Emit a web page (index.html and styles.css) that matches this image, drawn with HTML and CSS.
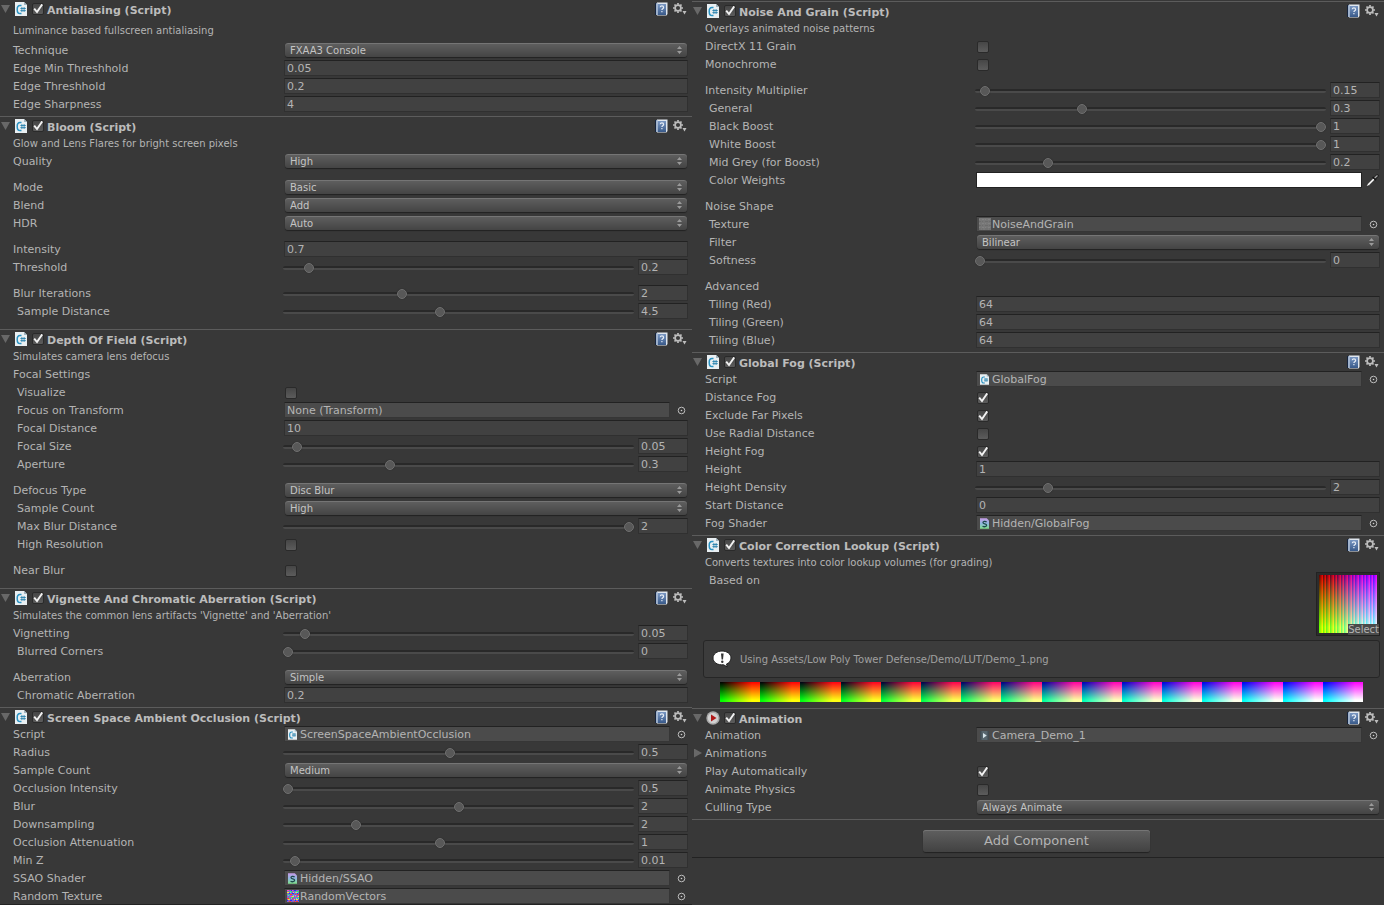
FILE: index.html
```html
<!DOCTYPE html>
<html lang="en">
<head>
<meta charset="utf-8">
<title>Inspector</title>
<link rel="stylesheet" href="styles.css">
</head>
<body>
<svg class="sprite" aria-hidden="true">
  <symbol id="i-script" viewBox="0 0 12 14">
    <path d="M0 0h9l3 3v11H0z" fill="#e9eff2"/><path d="M9 0v3h3z" fill="#9fb4bf"/>
    <path d="M6.500 3.600H5C3 3.600 2.200 5.200 2.200 7.500S3 11.600 5 11.600h1.500" fill="none" stroke="#2a92c2" stroke-width="1.500"/>
    <path d="M6.900 5v5M9.100 5v5M5.400 6.500h5.400M5.400 8.600h5.400" stroke="#1b7aa8" stroke-width=".8"/>
  </symbol>
  <symbol id="i-shader" viewBox="0 0 12 14">
    <path d="M0 0h9l3 3v11H0z" fill="url(#shade)"/>
    <path d="M8.800 4.800C7 3.600 3.800 4 4 6s4.800 1.200 4.800 3.400-3.400 2.400-5.400 1.200" fill="none" stroke="#1d4a4a" stroke-width="1.700"/>
  </symbol>
  <linearGradient id="shade" x1="0" y1="0" x2="0" y2="1"><stop offset="0" stop-color="#c79be8"/><stop offset=".5" stop-color="#8fb8e0"/><stop offset="1" stop-color="#7fe08a"/></linearGradient>
  <symbol id="i-book" viewBox="0 0 13 14">
    <path d="M0 1h2v12H0z" fill="#16243c"/><path d="M2 .5h10.500V12l-1 1.500H2z" fill="#dfe6ee"/>
    <path d="M2.500 2h8.500v11H2.500z" fill="url(#cover)"/><path d="M1 1.500l1.500-1V13L1 13z" fill="#9fb2cc"/>
    <path d="M5.200 5.300c.2-2 3.400-2 3.400.1 0 1.300-1.700 1.200-1.700 2.500M6.900 9v1.300" fill="none" stroke="#e6edf6" stroke-width="1.200"/>
  </symbol>
  <linearGradient id="cover" x1="0" y1="0" x2="0" y2="1"><stop offset="0" stop-color="#7896c2"/><stop offset="1" stop-color="#395a8a"/></linearGradient>
  <symbol id="i-gear" viewBox="0 0 14 12">
    <circle cx="5" cy="5" r="2.900" fill="none" stroke="#bdbdbd" stroke-width="1.700"/>
    <path d="M5 0v1.800M5 8.200V10M0 5h1.800M8.200 5H10M1.500 1.500l1.300 1.300M7.200 7.200l1.300 1.300M1.500 8.500l1.300-1.300M7.200 2.800l1.300-1.300" stroke="#bdbdbd" stroke-width="1.700"/>
    <path d="M9.500 8h4l-2 3.500z" fill="#bdbdbd"/>
  </symbol>
  <symbol id="i-pick" viewBox="0 0 9 9"><circle cx="4.500" cy="4.500" r="3.300" fill="none" stroke="#bcbcbc"/><circle cx="4.500" cy="4.500" r=".8" fill="#ccc"/></symbol>
  <symbol id="i-dropper" viewBox="0 0 13 13">
    <path d="M.4 12.600L1.500 10 7.500 4 9 5.500 3 11.500z" fill="#fff" stroke="#111" stroke-width=".5"/>
    <path d="M6.700 3l3.300 3.300" stroke="#111" stroke-width="1.500"/><path d="M9 4.200L11.300 1.800" stroke="#1a1a1a" stroke-width="2.800" stroke-linecap="round"/><path d="M8.700 4L11.500 1.400" stroke="#aaa" stroke-width="1.300"/>
  </symbol>
  <symbol id="i-noise" viewBox="0 0 12 12"><path d="M0 0h12v12H0z" fill="#777"/><path d="M0 1.500h12M0 5.500h12M0 9.500h12" stroke="#828282" stroke-dasharray="1 2 2 1"/><path d="M0 3.500h12M0 7.500h12M0 11h12" stroke="#6c6c6c" stroke-dasharray="2 1 1 2 3 1"/></symbol>
  <symbol id="i-vectors" viewBox="0 0 12 12"><path d="M0 0h12v12H0z" fill="#8a62c8"/>
    <path d="M0 .5h12M3 6.500h9" stroke="#ff3bd0" stroke-dasharray="2 3 1 1"/><path d="M1 1.500h11M2 7.500h10M0 4.500h3" stroke="#2cf06a" stroke-dasharray="1 1 2 3"/><path d="M0 2.500h12M1 9.500h11M5 6.500h7" stroke="#ffe23b" stroke-dasharray="2 4 1 1"/><path d="M2 3.500h10M0 10.500h12M4 .5h5" stroke="#2030ff" stroke-dasharray="1 2 2 3"/><path d="M3 4.500h9M2 11.500h10M0 8.500h6" stroke="#ff3b30" stroke-dasharray="2 3 1 1"/><path d="M1 5.500h11M4 8.500h8M3 2.500h8" stroke="#30f0f0" stroke-dasharray="1 4 1 1"/></symbol>
  <symbol id="i-clip" viewBox="0 0 12 12"><path d="M0 0h12v12H0z" fill="#56656d"/><path d="M0 0h2v12H0zM10 0h2v12h-2z" fill="#414d54"/><path d="M4 2.500l5 3.500-5 3.500z" fill="#d5e4ea"/></symbol>
  <symbol id="i-anim" viewBox="0 0 14 14"><circle cx="7" cy="7" r="6.700" fill="#a9a9a9"/><circle cx="7" cy="7" r="5.200" fill="#d2d2d2"/><path d="M5 3.500L10.500 7 5 10.500z" fill="#b01818"/></symbol>
  <symbol id="i-info" viewBox="0 0 20 18"><path d="M10 1c5 0 9 3 9 7 0 2.800-2 5-4.500 6l.8 3-3.600-2.200C5.400 15.400 1 12.300 1 8c0-4 4-7 9-7z" fill="#fff" stroke="#222"/><path d="M9 3.500h2.600L11 9.500H9.600z" fill="#333"/><circle cx="10.300" cy="11.700" r="1.200" fill="#333"/></symbol>
</svg>
<main class="inspector">
<div class="column">
  <section class="component">
    <header class="head"><button class="fold" aria-label="Collapse"></button><svg class="kind"><use href="#i-script"/></svg><input type="checkbox" id="aa" checked><label for="aa" class="title">Antialiasing (Script)</label><button class="tool" aria-label="Help"><svg class="book"><use href="#i-book"/></svg></button><button class="tool" aria-label="Settings"><svg class="gear"><use href="#i-gear"/></svg></button></header>
    <p class="note note-tall">Luminance based fullscreen antialiasing</p>
    <div class="row"><label for="tech">Technique</label><select id="tech"><option>FXAA3 Console</option></select></div>
    <div class="row"><label for="emin">Edge Min Threshhold</label><input type="text" id="emin" value="0.05"></div>
    <div class="row"><label for="eth">Edge Threshhold</label><input type="text" id="eth" value="0.2"></div>
    <div class="row"><label for="esh">Edge Sharpness</label><input type="text" id="esh" value="4"></div>
  </section>
  <section class="component loose">
    <header class="head"><button class="fold" aria-label="Collapse"></button><svg class="kind"><use href="#i-script"/></svg><input type="checkbox" id="bloom" checked><label for="bloom" class="title">Bloom (Script)</label><button class="tool" aria-label="Help"><svg class="book"><use href="#i-book"/></svg></button><button class="tool" aria-label="Settings"><svg class="gear"><use href="#i-gear"/></svg></button></header>
    <p class="note">Glow and Lens Flares for bright screen pixels</p>
    <div class="row"><label for="bq">Quality</label><select id="bq"><option>High</option></select></div>
    <div class="row spaced"><label for="bm">Mode</label><select id="bm"><option>Basic</option></select></div>
    <div class="row"><label for="bb">Blend</label><select id="bb"><option>Add</option></select></div>
    <div class="row"><label for="bh">HDR</label><select id="bh"><option>Auto</option></select></div>
    <div class="row spaced"><label for="bi">Intensity</label><input type="text" id="bi" value="0.7"></div>
    <div class="row"><label for="bt">Threshold</label><div class="slider"><input type="range" id="bt" min="-0.05" max="4" step="any" value="0.2"><input type="text" aria-label="Threshold value" value="0.2"></div></div>
    <div class="row spaced"><label for="bit">Blur Iterations</label><div class="slider"><input type="range" id="bit" min="1" max="4" step="any" value="2"><input type="text" aria-label="Blur Iterations value" value="2"></div></div>
    <div class="row"><label for="bsd" class="sub">Sample Distance</label><div class="slider"><input type="range" id="bsd" min="0.1" max="10" step="any" value="4.5"><input type="text" aria-label="Sample Distance value" value="4.5"></div></div>
  </section>
  <section class="component loose">
    <header class="head"><button class="fold" aria-label="Collapse"></button><svg class="kind"><use href="#i-script"/></svg><input type="checkbox" id="dof" checked><label for="dof" class="title">Depth Of Field (Script)</label><button class="tool" aria-label="Help"><svg class="book"><use href="#i-book"/></svg></button><button class="tool" aria-label="Settings"><svg class="gear"><use href="#i-gear"/></svg></button></header>
    <p class="note">Simulates camera lens defocus</p>
    <div class="row"><span>Focal Settings</span></div>
    <div class="row"><label for="dv" class="sub">Visualize</label><input type="checkbox" id="dv"></div>
    <div class="row"><label for="dt" class="sub">Focus on Transform</label><div class="object"><button id="dt" class="slot"><span>None (Transform)</span></button><button class="pick" aria-label="Select object"><svg><use href="#i-pick"/></svg></button></div></div>
    <div class="row"><label for="dd" class="sub">Focal Distance</label><input type="text" id="dd" value="10"></div>
    <div class="row"><label for="ds" class="sub">Focal Size</label><div class="slider"><input type="range" id="ds" min="0" max="2" step="any" value="0.05"><input type="text" aria-label="Focal Size value" value="0.05"></div></div>
    <div class="row"><label for="da" class="sub">Aperture</label><div class="slider"><input type="range" id="da" min="0" max="1" step="any" value="0.3"><input type="text" aria-label="Aperture value" value="0.3"></div></div>
    <div class="row spaced"><label for="dft">Defocus Type</label><select id="dft"><option>Disc Blur</option></select></div>
    <div class="row"><label for="dsc" class="sub">Sample Count</label><select id="dsc"><option>High</option></select></div>
    <div class="row"><label for="dmb" class="sub">Max Blur Distance</label><div class="slider"><input type="range" id="dmb" min="0.1" max="2" step="any" value="2"><input type="text" aria-label="Max Blur Distance value" value="2"></div></div>
    <div class="row"><label for="dhr" class="sub">High Resolution</label><input type="checkbox" id="dhr"></div>
    <div class="row spaced"><label for="dnb">Near Blur</label><input type="checkbox" id="dnb"></div>
  </section>
  <section class="component">
    <header class="head"><button class="fold" aria-label="Collapse"></button><svg class="kind"><use href="#i-script"/></svg><input type="checkbox" id="vig" checked><label for="vig" class="title">Vignette And Chromatic Aberration (Script)</label><button class="tool" aria-label="Help"><svg class="book"><use href="#i-book"/></svg></button><button class="tool" aria-label="Settings"><svg class="gear"><use href="#i-gear"/></svg></button></header>
    <p class="note">Simulates the common lens artifacts 'Vignette' and 'Aberration'</p>
    <div class="row"><label for="vv">Vignetting</label><div class="slider"><input type="range" id="vv" min="0" max="1" step="any" value="0.05"><input type="text" aria-label="Vignetting value" value="0.05"></div></div>
    <div class="row"><label for="vb" class="sub">Blurred Corners</label><div class="slider"><input type="range" id="vb" min="0" max="1" step="any" value="0"><input type="text" aria-label="Blurred Corners value" value="0"></div></div>
    <div class="row spaced"><label for="va">Aberration</label><select id="va"><option>Simple</option></select></div>
    <div class="row"><label for="vc" class="sub">Chromatic Aberration</label><input type="text" id="vc" value="0.2"></div>
  </section>
  <section class="component flush">
    <header class="head"><button class="fold" aria-label="Collapse"></button><svg class="kind"><use href="#i-script"/></svg><input type="checkbox" id="ssao" checked><label for="ssao" class="title">Screen Space Ambient Occlusion (Script)</label><button class="tool" aria-label="Help"><svg class="book"><use href="#i-book"/></svg></button><button class="tool" aria-label="Settings"><svg class="gear"><use href="#i-gear"/></svg></button></header>
    <div class="row"><label for="ss">Script</label><div class="object"><button id="ss" class="slot"><svg><use href="#i-script"/></svg><span>ScreenSpaceAmbientOcclusion</span></button><button class="pick" aria-label="Select object"><svg><use href="#i-pick"/></svg></button></div></div>
    <div class="row"><label for="sr">Radius</label><div class="slider"><input type="range" id="sr" min="0.05" max="1" step="any" value="0.5"><input type="text" aria-label="Radius value" value="0.5"></div></div>
    <div class="row"><label for="ssc">Sample Count</label><select id="ssc"><option>Medium</option></select></div>
    <div class="row"><label for="soi">Occlusion Intensity</label><div class="slider"><input type="range" id="soi" min="0.5" max="4" step="any" value="0.5"><input type="text" aria-label="Occlusion Intensity value" value="0.5"></div></div>
    <div class="row"><label for="sb">Blur</label><div class="slider"><input type="range" id="sb" min="0" max="4" step="any" value="2"><input type="text" aria-label="Blur value" value="2"></div></div>
    <div class="row"><label for="sd">Downsampling</label><div class="slider"><input type="range" id="sd" min="1" max="6" step="any" value="2"><input type="text" aria-label="Downsampling value" value="2"></div></div>
    <div class="row"><label for="soa">Occlusion Attenuation</label><div class="slider"><input type="range" id="soa" min="0.2" max="2" step="any" value="1"><input type="text" aria-label="Occlusion Attenuation value" value="1"></div></div>
    <div class="row"><label for="sz">Min Z</label><div class="slider"><input type="range" id="sz" min="0" max="0.5" step="any" value="0.01"><input type="text" aria-label="Min Z value" value="0.01"></div></div>
    <div class="row"><label for="ssh">SSAO Shader</label><div class="object"><button id="ssh" class="slot"><svg><use href="#i-shader"/></svg><span>Hidden/SSAO</span></button><button class="pick" aria-label="Select object"><svg><use href="#i-pick"/></svg></button></div></div>
    <div class="row"><label for="srt">Random Texture</label><div class="object"><button id="srt" class="slot"><svg class="texture"><use href="#i-vectors"/></svg><span>RandomVectors</span></button><button class="pick" aria-label="Select object"><svg><use href="#i-pick"/></svg></button></div></div>
  </section>
</div>
<div class="column column-right">
  <section class="component">
    <header class="head"><button class="fold" aria-label="Collapse"></button><svg class="kind"><use href="#i-script"/></svg><input type="checkbox" id="ng" checked><label for="ng" class="title">Noise And Grain (Script)</label><button class="tool" aria-label="Help"><svg class="book"><use href="#i-book"/></svg></button><button class="tool" aria-label="Settings"><svg class="gear"><use href="#i-gear"/></svg></button></header>
    <p class="note">Overlays animated noise patterns</p>
    <div class="row"><label for="nd">DirectX 11 Grain</label><input type="checkbox" id="nd"></div>
    <div class="row"><label for="nm">Monochrome</label><input type="checkbox" id="nm"></div>
    <div class="row spaced"><label for="ni">Intensity Multiplier</label><div class="slider"><input type="range" id="ni" min="0" max="10" step="any" value="0.15"><input type="text" aria-label="Intensity Multiplier value" value="0.15"></div></div>
    <div class="row"><label for="nge" class="sub">General</label><div class="slider"><input type="range" id="nge" min="0" max="1" step="any" value="0.3"><input type="text" aria-label="General value" value="0.3"></div></div>
    <div class="row"><label for="nbb" class="sub">Black Boost</label><div class="slider"><input type="range" id="nbb" min="0" max="1" step="any" value="1"><input type="text" aria-label="Black Boost value" value="1"></div></div>
    <div class="row"><label for="nwb" class="sub">White Boost</label><div class="slider"><input type="range" id="nwb" min="0" max="1" step="any" value="1"><input type="text" aria-label="White Boost value" value="1"></div></div>
    <div class="row"><label for="nmg" class="sub">Mid Grey (for Boost)</label><div class="slider"><input type="range" id="nmg" min="0" max="1" step="any" value="0.2"><input type="text" aria-label="Mid Grey value" value="0.2"></div></div>
    <div class="row"><label for="ncw" class="sub">Color Weights</label><div class="object"><input type="color" id="ncw" value="#ffffff"><button class="pick" aria-label="Pick color"><svg class="dropper"><use href="#i-dropper"/></svg></button></div></div>
    <div class="row spaced"><span>Noise Shape</span></div>
    <div class="row"><label for="nt" class="sub">Texture</label><div class="object"><button id="nt" class="slot"><svg class="texture"><use href="#i-noise"/></svg><span>NoiseAndGrain</span></button><button class="pick" aria-label="Select object"><svg><use href="#i-pick"/></svg></button></div></div>
    <div class="row"><label for="nf" class="sub">Filter</label><select id="nf"><option>Bilinear</option></select></div>
    <div class="row"><label for="ns" class="sub">Softness</label><div class="slider"><input type="range" id="ns" min="0" max="1" step="any" value="0"><input type="text" aria-label="Softness value" value="0"></div></div>
    <div class="row spaced"><span>Advanced</span></div>
    <div class="row"><label for="ntr" class="sub">Tiling (Red)</label><input type="text" id="ntr" value="64"></div>
    <div class="row"><label for="ntg" class="sub">Tiling (Green)</label><input type="text" id="ntg" value="64"></div>
    <div class="row"><label for="ntb" class="sub">Tiling (Blue)</label><input type="text" id="ntb" value="64"></div>
  </section>
  <section class="component">
    <header class="head"><button class="fold" aria-label="Collapse"></button><svg class="kind"><use href="#i-script"/></svg><input type="checkbox" id="gf" checked><label for="gf" class="title">Global Fog (Script)</label><button class="tool" aria-label="Help"><svg class="book"><use href="#i-book"/></svg></button><button class="tool" aria-label="Settings"><svg class="gear"><use href="#i-gear"/></svg></button></header>
    <div class="row"><label for="gs">Script</label><div class="object"><button id="gs" class="slot"><svg><use href="#i-script"/></svg><span>GlobalFog</span></button><button class="pick" aria-label="Select object"><svg><use href="#i-pick"/></svg></button></div></div>
    <div class="row"><label for="gd">Distance Fog</label><input type="checkbox" id="gd" checked></div>
    <div class="row"><label for="ge">Exclude Far Pixels</label><input type="checkbox" id="ge" checked></div>
    <div class="row"><label for="gr">Use Radial Distance</label><input type="checkbox" id="gr"></div>
    <div class="row"><label for="gh">Height Fog</label><input type="checkbox" id="gh" checked></div>
    <div class="row"><label for="ghe">Height</label><input type="text" id="ghe" value="1"></div>
    <div class="row"><label for="ghd">Height Density</label><div class="slider"><input type="range" id="ghd" min="0" max="10" step="any" value="2"><input type="text" aria-label="Height Density value" value="2"></div></div>
    <div class="row"><label for="gsd">Start Distance</label><input type="text" id="gsd" value="0"></div>
    <div class="row"><label for="gsh">Fog Shader</label><div class="object"><button id="gsh" class="slot"><svg><use href="#i-shader"/></svg><span>Hidden/GlobalFog</span></button><button class="pick" aria-label="Select object"><svg><use href="#i-pick"/></svg></button></div></div>
  </section>
  <section class="component lookup">
    <header class="head"><button class="fold" aria-label="Collapse"></button><svg class="kind"><use href="#i-script"/></svg><input type="checkbox" id="cc" checked><label for="cc" class="title">Color Correction Lookup (Script)</label><button class="tool" aria-label="Help"><svg class="book"><use href="#i-book"/></svg></button><button class="tool" aria-label="Settings"><svg class="gear"><use href="#i-gear"/></svg></button></header>
    <p class="note">Converts textures into color lookup volumes (for grading)</p>
    <div class="based"><label for="cb" class="sub">Based on</label>
      <div class="thumb"><div class="tiles"><i style="background-color:#000000"></i><i style="background-color:#000008"></i><i style="background-color:#000014"></i><i style="background-color:#000022"></i><i style="background-color:#000038"></i><i style="background-color:#00004e"></i><i style="background-color:#000068"></i><i style="background-color:#000084"></i><i style="background-color:#0000a0"></i><i style="background-color:#0000b8"></i><i style="background-color:#0000cc"></i><i style="background-color:#0000dd"></i><i style="background-color:#0000ea"></i><i style="background-color:#0000f4"></i><i style="background-color:#0000fc"></i><i style="background-color:#0000ff"></i></div><button id="cb" class="choose">Select</button></div>
    </div>
    <div class="help"><svg><use href="#i-info"/></svg><p>Using Assets/Low Poly Tower Defense/Demo/LUT/Demo_1.png</p></div>
    <div class="tiles strip"><i style="background-color:#000000"></i><i style="background-color:#000008"></i><i style="background-color:#000014"></i><i style="background-color:#000022"></i><i style="background-color:#000038"></i><i style="background-color:#00004e"></i><i style="background-color:#000068"></i><i style="background-color:#000084"></i><i style="background-color:#0000a0"></i><i style="background-color:#0000b8"></i><i style="background-color:#0000cc"></i><i style="background-color:#0000dd"></i><i style="background-color:#0000ea"></i><i style="background-color:#0000f4"></i><i style="background-color:#0000fc"></i><i style="background-color:#0000ff"></i></div>
  </section>
  <section class="component">
    <header class="head"><button class="fold" aria-label="Collapse"></button><svg class="kind round"><use href="#i-anim"/></svg><input type="checkbox" id="an" checked><label for="an" class="title">Animation</label><button class="tool" aria-label="Help"><svg class="book"><use href="#i-book"/></svg></button><button class="tool" aria-label="Settings"><svg class="gear"><use href="#i-gear"/></svg></button></header>
    <div class="row"><label for="ac">Animation</label><div class="object"><button id="ac" class="slot"><svg><use href="#i-clip"/></svg><span>Camera_Demo_1</span></button><button class="pick" aria-label="Select object"><svg><use href="#i-pick"/></svg></button></div></div>
    <div class="row row-fold"><button class="fold closed" aria-label="Expand"></button><span>Animations</span></div>
    <div class="row"><label for="ap">Play Automatically</label><input type="checkbox" id="ap" checked></div>
    <div class="row"><label for="aph">Animate Physics</label><input type="checkbox" id="aph"></div>
    <div class="row"><label for="act">Culling Type</label><select id="act"><option>Always Animate</option></select></div>
  </section>
  <footer class="footer"><button class="add">Add Component</button></footer>
</div>
</main>
</body>
</html>
```
FILE: styles.css
```css
* { box-sizing: border-box; }

body {
  margin: 0;
  background: #383838;
  color: #b4b4b4;
  font: 11px/18px "DejaVu Sans", sans-serif;
}

button, input, select {
  margin: 0;
  padding: 0;
  border: 0;
  background: none;
  color: inherit;
  font: inherit;
}

p { margin: 0; }
svg { display: block; flex: none; }
.sprite { position: absolute; width: 0; height: 0; }

.inspector {
  display: grid;
  grid-template-columns: 1fr 1fr;
  min-height: 100vh;
}

.column { min-width: 0; border-bottom: 1px solid #232323; }
.column-right { padding-top: 1px; border-bottom: 0; }

.component {
  padding: 0 4px 3px 13px;
  border-top: 1px solid #5c5c5c;
}
.column:first-child .component:first-child { border-top: 0; }
.loose { padding-bottom: 9px; }
.flush { padding-bottom: 0; margin-bottom: -1px; }

/* Component header */
.head {
  display: flex;
  align-items: center;
  height: 17px;
  margin-left: -13px;
  padding-right: 1px;
}
.fold {
  width: 9px;
  height: 8px;
  margin: 1px 5px 0 1px;
  background: #686868;
  clip-path: polygon(0 0, 100% 0, 50% 100%);
}
.kind { width: 12px; height: 14px; margin-right: 5px; }
.round { width: 14px; height: 14px; margin: 0 4px 0 -1px; }
.head input[type="checkbox"] { margin-left: 0; }
.title {
  flex: 1;
  margin-left: 3px;
  padding-top: 3px;
  font-weight: bold;
  color: #bcbcbc;
}
.tool { margin-left: 5px; }
.book { width: 13px; height: 14px; }
.gear { width: 14px; height: 12px; }
.head .title { padding-top: 4px; }

.note { height: 18px; font-size: 10px; line-height: 20px; }
.note-tall { height: 24px; line-height: 28px; }

/* Property rows */
.row {
  display: grid;
  grid-template-columns: calc(40% + 1px) 1fr;
  grid-template-rows: 18px;
  align-items: center;
}
.row > label, .row > span { padding-top: 2px; }
.spaced { margin-top: 8px; }
.sub { padding-left: 4px; }

.row-fold {
  grid-template-columns: 9px 1fr;
  column-gap: 3px;
  margin-left: -12px;
}
.closed { width: 8px; height: 9px; margin: 0 0 0 1px; clip-path: polygon(0 0, 100% 50%, 0 100%); }

input[type="text"] {
  width: 100%;
  min-width: 0;
  height: 16px;
  padding: 0 2px;
  border: 1px solid #303030;
  border-top-color: #222;
  background: #414141;
  line-height: 14px;
}

input[type="checkbox"] {
  appearance: none;
  width: 12px;
  height: 12px;
  margin-left: 1px;
  border: 1px solid #2a2a2a;
  border-radius: 2px;
  background: linear-gradient(#464646, #5c5c5c);
}
.row input[type="checkbox"] { margin-top: 1px; }
input[type="checkbox"]:checked {
  background: url("data:image/svg+xml,%3Csvg xmlns='http://www.w3.org/2000/svg' viewBox='0 0 10 10'%3E%3Cpath d='M1.200 4.600L4 8L9.300 .3' fill='none' stroke='%23f2f2f2' stroke-width='1.900'/%3E%3C/svg%3E"), linear-gradient(#464646, #5c5c5c);
}

select {
  appearance: none;
  height: 14px;
  margin: 0 1px;
  padding: 0 5px;
  border-radius: 3px;
  background:
    url("data:image/svg+xml,%3Csvg xmlns='http://www.w3.org/2000/svg' width='5' height='8'%3E%3Cpath d='M0 3L2.500 0L5 3zM0 5L2.500 8L5 5z' fill='%239a9a9a'/%3E%3C/svg%3E") right 5px center no-repeat,
    linear-gradient(#606060, #444);
  box-shadow: inset 0 1px #757575, 0 1px 1px #222;
  color: #c4c4c4;
  font-size: 10px;
  line-height: 13px;
}

.slider { display: grid; grid-template-columns: 1fr 50px; column-gap: 4px; }

input[type="range"] {
  appearance: none;
  width: calc(100% + 1px);
  height: 16px;
  margin-left: -1px;
}
input[type="range"]::-webkit-slider-runnable-track {
  height: 4px;
  margin-top: 1px;
  border-radius: 2px;
  background: linear-gradient(#292929 50%, #4a4a4a 50%);
}
input[type="range"]::-webkit-slider-thumb {
  appearance: none;
  width: 10px;
  height: 10px;
  margin-top: -3px;
  border: 1px solid #707070;
  border-radius: 50%;
  background: #585858;
  box-shadow: 0 0 1px #222;
}

/* Reference slots */
.object { display: grid; grid-template-columns: 1fr 18px; align-items: center; }
.slot {
  display: flex;
  align-items: center;
  height: 16px;
  padding: 0 2px;
  border: 1px solid #363636;
  border-top-color: #222;
  background: #4b4b4b;
  line-height: 14px;
}
.slot span { padding-top: 2px; }
.slot svg { width: 9px; height: 11px; margin: 0 3px 0 1px; }
.slot .texture { width: 12px; height: 12px; margin: 0 1px 0 0; }
.pick { display: grid; justify-content: end; }
.pick svg { width: 9px; height: 9px; margin-right: 2px; }
.pick .dropper { width: 13px; height: 13px; margin-right: 1px; }

input[type="color"] {
  width: 100%;
  height: 16px;
  border: 1px solid #222;
}
input[type="color"]::-webkit-color-swatch-wrapper { padding: 0; }
input[type="color"]::-webkit-color-swatch { border: 0; }

/* Color lookup */
.lookup { padding-bottom: 6px; }
.based {
  display: flex;
  justify-content: space-between;
  height: 69px;
}
.based label { padding-top: 1px; }
.thumb {
  position: relative;
  width: 64px;
  height: 64px;
  margin-top: 1px;
  padding: 2px;
  border: 1px solid #222;
  background: #2c2c2c;
}
.tiles { display: flex; height: 100%; }
.tiles i {
  flex: 1;
  background-image: linear-gradient(to right, #000 5%, #f00 80%), linear-gradient(#000, #0f0 90%);
  background-blend-mode: screen;
}
.thumb i { background-image: linear-gradient(to right, #500, #f00), linear-gradient(#000, #0f0 90%); }
.strip { height: 20px; margin: 4px 17px 0 15px; }
.choose {
  position: absolute;
  right: 0;
  bottom: 0;
  background: #4a4a4a;
  font-size: 10px;
  line-height: 11px;
}
.help {
  display: flex;
  align-items: center;
  gap: 8px;
  height: 38px;
  margin-left: -2px;
  padding-left: 8px;
  border: 1px solid #262626;
  border-radius: 3px;
  background: #3c3c3c;
  color: #a0a0a0;
  font-size: 10px;
}
.help p { padding-top: 2px; }
.help svg { width: 20px; height: 18px; }

.footer {
  display: flex;
  justify-content: center;
  padding: 10px 3px 5px 0;
  border-top: 1px solid #5c5c5c;
  border-bottom: 1px solid #222;
}
.add {
  width: 33%;
  height: 22px;
  border-radius: 3px;
  background: linear-gradient(#5f5f5f, #424242);
  box-shadow: inset 0 1px #757575, 0 1px 1px #222;
  font-size: 13px;
}
```
